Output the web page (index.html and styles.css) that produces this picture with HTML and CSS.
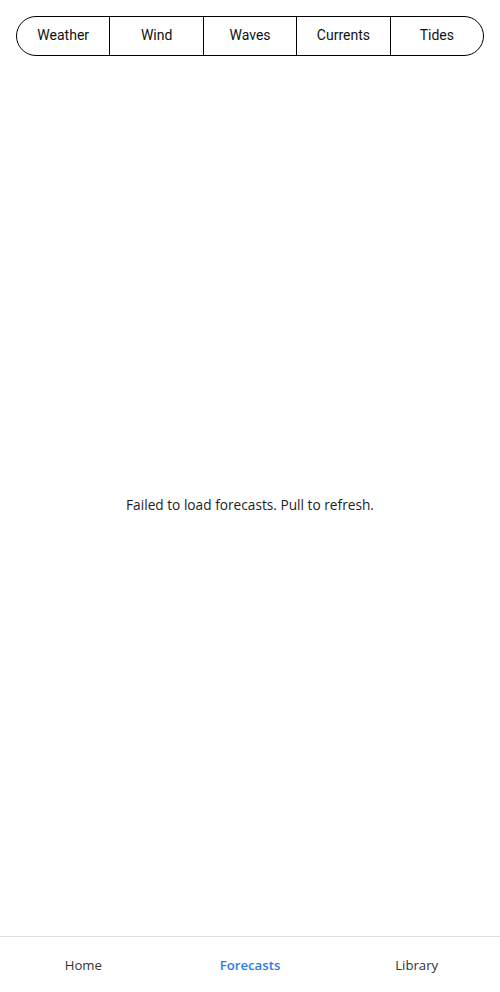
FILE: index.html
```html
<!DOCTYPE html>
<html>
<head>
<meta charset="utf-8">
<link rel="stylesheet" href="styles.css">
</head>
<body>
<div class="app">
  <header class="top">
    <div class="segments">
      <button class="seg">Weather</button>
      <button class="seg">Wind</button>
      <button class="seg">Waves</button>
      <button class="seg">Currents</button>
      <button class="seg">Tides</button>
    </div>
  </header>
  <main class="content">
    <p class="message">Failed to load forecasts. Pull to refresh.</p>
  </main>
  <nav class="tabbar">
    <div class="tab">Home</div>
    <div class="tab active">Forecasts</div>
    <div class="tab">Library</div>
  </nav>
</div>
</body>
</html>
```

FILE: styles.css
```css
html, body {
  margin: 0;
  padding: 0;
  background: #fff;
}
.app {
  height: 992px;
  display: flex;
  flex-direction: column;
  font-family: "Open Sans", "Noto Sans", sans-serif;
}
.top {
  padding: 16px;
}
.segments {
  display: flex;
  height: 40px;
  box-sizing: border-box;
  border: 1px solid #000;
  border-radius: 20px;
  overflow: hidden;
}
.seg {
  flex: 1;
  margin: 0;
  padding: 0 0 3px;
  border: none;
  border-left: 1px solid #000;
  background: transparent;
  font-family: Roboto, sans-serif;
  font-size: 14px;
  color: #111;
}
.seg:first-child {
  border-left: none;
}
.content {
  flex: 1;
  display: flex;
  align-items: center;
  justify-content: center;
}
.message {
  margin: 0;
  font-size: 13.7px;
  color: #222;
}
.tabbar {
  height: 56px;
  box-sizing: border-box;
  padding-top: 1px;
  border-top: 1px solid #e0e0e0;
  display: flex;
  align-items: center;
}
.tab {
  flex: 1;
  text-align: center;
  font-size: 13.2px;
  color: #333;
}
.tab.active {
  color: #2a7de1;
  font-weight: 600;
}
```
